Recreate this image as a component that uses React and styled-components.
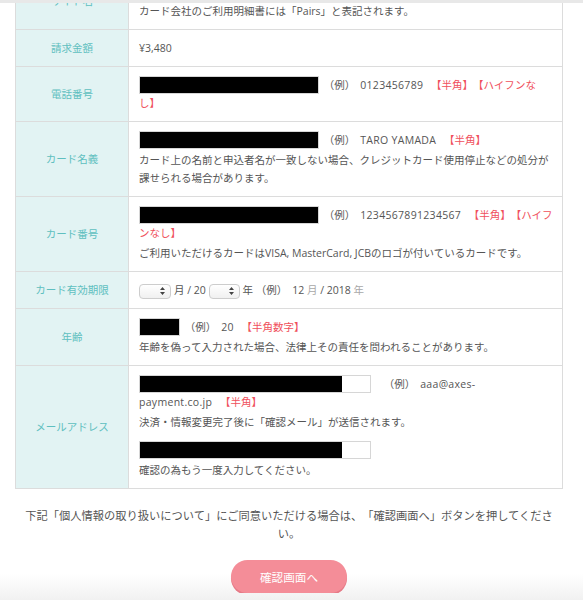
import styled, { createGlobalStyle } from "styled-components";

const GlobalStyle = createGlobalStyle`
  html {
    min-height: 100%;
    background: linear-gradient(to bottom, #fff 0, #fff 574px, #f1f1f1 600px) no-repeat;
  }
  body {
    margin: 0;
    font-family: "Open Sans", "Noto Sans CJK JP", sans-serif;
    color: #555;
    text-spacing-trim: space-all;
  }
`

const TopEdge = styled.div`
  position: fixed;
  top: 0;
  left: 0;
  right: 0;
  height: 3px;
  background: #e8e8e8;
`

const Page = styled.div`
  margin-top: -28px;
  padding: 0 20px 0 15px;
`

const Table = styled.table`
  width: 100%;
  border-collapse: collapse;
  font-size: 10.5px;
  line-height: 18px;
`

const Label = styled.th`
  width: 112px;
  padding: 0;
  border: 1px solid #dcdcdc;
  background: #e2f3f3;
  color: #5fbfc0;
  font-weight: normal;
  text-align: center;
  vertical-align: middle;
`

const Value = styled.td`
  padding: 9px 9px 9px 10px;
  border: 1px solid #dcdcdc;
  background: #fff;
  text-align: left;
  vertical-align: top;
`

const Field = styled.span`
  display: inline-block;
  vertical-align: top;
  box-sizing: border-box;
  width: ${(p) => p.$w}px;
  height: 18px;
  margin-right: ${(p) => p.$gap || 2}px;
  border: 1px solid #d6d6d6;
  background: #fff;
`

const Mask = styled.span`
  display: block;
  height: 100%;
  width: ${(p) => (p.$w ? `${p.$w}px` : "100%")};
  background: #000;
`

const Example = styled.span`
  margin-right: 5px;
`

const Sample = styled.span`
  letter-spacing: 0.3px;
`

const Tag = styled.span`
  margin-left: 5px;
  color: #f0505c;
`

const Unit = styled.span`
  color: #a8a8a8;
`

const Note = styled.p`
  margin: 2px 0 0;
`

const Confirm = styled.div`
  margin-top: 10px;
`

const Select = styled.span`
  display: inline-flex;
  align-items: center;
  justify-content: flex-end;
  box-sizing: border-box;
  width: ${(p) => p.$w}px;
  height: 15px;
  padding-right: 5px;
  margin-right: 3px;
  vertical-align: middle;
  border: 1px solid #cdcdcd;
  border-radius: 4px;
  background: linear-gradient(#fff, #f0f0f0);
`

const Agree = styled.p`
  margin: 18px 0 0;
  padding: 0 5px;
  font-size: 11.25px;
  line-height: 18px;
  text-align: center;
`

const Submit = styled.button`
  display: block;
  width: 116px;
  height: 33px;
  margin: 17px auto 0;
  border: 0;
  border-radius: 17px;
  background: #f48d98;
  box-shadow: 0 2px 0 #e67a87;
  color: #fff;
  font-family: inherit;
  font-size: 11.6px;
`

const Arrows = () => (
  <svg width="5" height="8" viewBox="0 0 5 8">
    <path d="M2.5 0 L5 3 L0 3 Z M2.5 8 L5 5 L0 5 Z" fill="#444" />
  </svg>
)

const App = () => {
  return (
    <>
      <GlobalStyle />
      <TopEdge />
      <Page>
        <Table>
          <tbody>
            <tr>
              <Label>サイト名</Label>
              <Value>
                Pairs
                <Note>カード会社のご利用明細書には「Pairs」と表記されます。</Note>
              </Value>
            </tr>
            <tr>
              <Label>請求金額</Label>
              <Value>¥3,480</Value>
            </tr>
            <tr>
              <Label>電話番号</Label>
              <Value>
                <Field $w={180}><Mask /></Field> <Example>（例）</Example><Sample>0123456789</Sample> <Tag>【半角】【ハイフンな<br />し】</Tag>
              </Value>
            </tr>
            <tr>
              <Label>カード名義</Label>
              <Value>
                <Field $w={180}><Mask /></Field> <Example>（例）</Example><Sample>TARO YAMADA</Sample> <Tag>【半角】</Tag>
                <Note>カード上の名前と申込者名が一致しない場合、クレジットカード使用停止などの処分が課せられる場合があります。</Note>
              </Value>
            </tr>
            <tr>
              <Label>カード番号</Label>
              <Value>
                <Field $w={180}><Mask /></Field> <Example>（例）</Example><Sample>1234567891234567</Sample> <Tag>【半角】【ハイフンなし】</Tag>
                <Note>ご利用いただけるカードはVISA, MasterCard, JCBのロゴが付いているカードです。</Note>
              </Value>
            </tr>
            <tr>
              <Label>カード有効期限</Label>
              <Value>
                <Select $w={32}><Arrows /></Select>月 / 20 <Select $w={31}><Arrows /></Select>年 <Example>（例）</Example>12 <Unit>月</Unit> / 2018 <Unit>年</Unit>
              </Value>
            </tr>
            <tr>
              <Label>年齢</Label>
              <Value>
                <Field $w={41}><Mask /></Field> <Example>（例）</Example><Sample>20</Sample> <Tag>【半角数字】</Tag>
                <Note>年齢を偽って入力された場合、法律上その責任を問われることがあります。</Note>
              </Value>
            </tr>
            <tr>
              <Label>メールアドレス</Label>
              <Value>
                <Field $w={232} $gap={10}><Mask $w={202} /></Field> <Example>（例）</Example><Sample>aaa@axes-</Sample><br /><Sample>payment.co.jp</Sample> <Tag>【半角】</Tag>
                <Note>決済・情報変更完了後に「確認メール」が送信されます。</Note>
                <Confirm>
                  <Field $w={232}><Mask $w={202} /></Field>
                  <Note>確認の為もう一度入力してください。</Note>
                </Confirm>
              </Value>
            </tr>
          </tbody>
        </Table>
        <Agree>下記「個人情報の取り扱いについて」にご同意いただける場合は、「確認画面へ」ボタンを押してください。</Agree>
        <Submit type="button">確認画面へ</Submit>
      </Page>
    </>
  )
}

export default App;
